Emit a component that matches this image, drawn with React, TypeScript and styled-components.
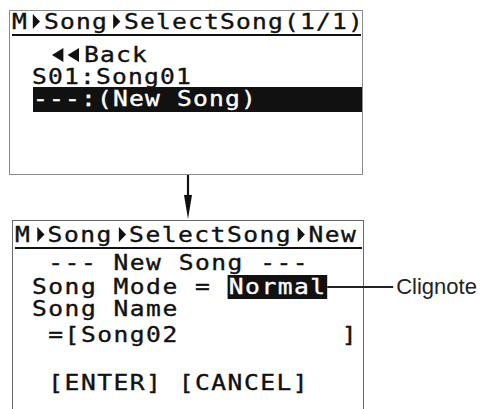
import React from "react";
import styled, { createGlobalStyle } from "styled-components";

const LCD_FONT = `"DejaVu Sans Mono", "Liberation Mono", monospace`;
const LCD_SIZE = 20.5;
const ADVANCE = LCD_SIZE * 0.602;
/** the LCD glyphs are wider than any installed mono face, so stretch them */
const STRETCH = 1.2;
const INK = "#111";

const GlobalStyle = createGlobalStyle`
  html, body {
    margin: 0;
    padding: 0;
    background: #fff;
  }
`;

const Page = styled.div`
  width: 484px;
  height: 409px;
  overflow: hidden;
  box-sizing: border-box;
  padding-top: 10px;
  display: flex;
  flex-direction: column;
  align-items: flex-start;
  background: #fff;
`;

/** One LCD panel; $pitch is the character cell width on screen, in px */
const Screen = styled.div<{ $pitch: number; $left: number; $width: number; $open?: boolean }>`
  box-sizing: border-box;
  margin-left: ${({ $left }) => $left}px;
  width: ${({ $width }) => $width}px;
  height: ${({ $open }) => ($open ? 200 : 175)}px;
  border: 1px solid ${({ $open }) => ($open ? "#6a6a6a" : "#8c8c8c")};
  ${({ $open }) => ($open ? "border-bottom: none; padding-top: 3px;" : "")}
  font-family: ${LCD_FONT};
  font-weight: normal;
  font-size: ${LCD_SIZE}px;
  letter-spacing: ${({ $pitch }) => ($pitch / STRETCH - ADVANCE).toFixed(2)}px;
  color: ${INK};
  white-space: pre;
  -webkit-text-stroke: 0.35px ${INK};
`;

const Lcd = styled.span`
  display: inline-block;
  transform: scaleX(${STRETCH});
  transform-origin: 0 50%;
`;

const TitleLine = styled.div<{ $indent: number }>`
  height: 23px;
  line-height: 23px;
  margin: 0 1px 0 2px;
  padding-left: ${({ $indent }) => $indent}px;
  border-bottom: 2px solid ${INK};
`;

const Line = styled.div<{ $indent: number; $gap?: number }>`
  height: 22px;
  line-height: 22px;
  margin-top: ${({ $gap }) => $gap ?? 0}px;
  padding-left: ${({ $indent }) => $indent}px;
`;

const SelectedBar = styled.div<{ $indent: number; $gap?: number }>`
  height: 25px;
  line-height: 25px;
  margin-top: ${({ $gap }) => $gap ?? 0}px;
  margin-left: ${({ $indent }) => $indent}px;
  background: ${INK};
  color: #fff;
  -webkit-text-stroke: 0.35px #fff;
`;

const Blink = styled.span`
  position: relative;
  background: ${INK};
  color: #fff;
  -webkit-text-stroke: 0.35px #fff;
  padding: 0 1px;
`;

/** annotation pointing at the blinking value; un-stretched so its label reads normally */
const Callout = styled.span`
  position: absolute;
  left: 100%;
  top: 50%;
  transform: translateY(-50%) scaleX(${1 / STRETCH});
  transform-origin: 0 50%;
  display: flex;
  align-items: center;
  letter-spacing: normal;
  -webkit-text-stroke: 0;
`;

const Leader = styled.span`
  display: block;
  width: 66px;
  height: 1.5px;
  background: #222;
`;

const Label = styled.span`
  margin-left: 3px;
  font-family: "Liberation Sans", Arial, sans-serif;
  font-weight: normal;
  font-size: 22px;
  line-height: 24px;
  color: #222;
`;

const Glyph = styled.svg<{ $cell: number }>`
  display: inline-block;
  width: ${({ $cell }) => $cell}px;
  height: 15px;
  vertical-align: baseline;
`;

const Connector = styled.div`
  height: 45px;
  padding-left: 183px;
  box-sizing: border-box;
`;

const ArrowSvg = styled.svg`
  display: block;
  width: 10px;
  height: 45px;
`;

/** LCD "▶" separator; cell is the unstretched width */
const Pointer = ({ pitch }: { pitch: number }) => {
  const cell = pitch / STRETCH;
  return (
    <Glyph $cell={cell} viewBox={`0 0 ${cell} 15`}>
      <polygon points={`${cell - 9},0 ${cell - 3},7.5 ${cell - 9},15`} fill={INK} />
    </Glyph>
  );
};

/** LCD "◀" back marker */
const BackMark = ({ pitch }: { pitch: number }) => {
  const cell = pitch / STRETCH;
  return (
    <Glyph $cell={cell} viewBox={`0 0 ${cell} 15`}>
      <polygon points="0,8 9.5,1 9.5,15" fill={INK} />
    </Glyph>
  );
};

const TOP_PITCH = 16;
const BOTTOM_PITCH = 16.3;

export default function App() {
  return (
    <>
      <GlobalStyle />
      <Page>
        <Screen $pitch={TOP_PITCH} $left={9} $width={354}>
          <TitleLine $indent={0}>
            <Lcd>
              M<Pointer pitch={TOP_PITCH} />Song<Pointer pitch={TOP_PITCH} />SelectSong(1/1)
            </Lcd>
          </TitleLine>
          <Line $indent={42} $gap={8}>
            <Lcd>
              <BackMark pitch={TOP_PITCH} />
              <BackMark pitch={TOP_PITCH} />Back
            </Lcd>
          </Line>
          <Line $indent={22}>
            <Lcd>S01:Song01</Lcd>
          </Line>
          <SelectedBar $indent={23} $gap={-1}>
            <Lcd>---:(New Song)</Lcd>
          </SelectedBar>
        </Screen>

        <Connector>
          <ArrowSvg viewBox="0 0 10 45">
            <line x1="5" y1="0" x2="5" y2="26" stroke={INK} strokeWidth="2.2" />
            <polygon points="1,20 9,20 5,44" fill={INK} />
          </ArrowSvg>
        </Connector>

        <Screen $pitch={BOTTOM_PITCH} $left={12} $width={352} $open>
          <TitleLine $indent={0}>
            <Lcd>
              M<Pointer pitch={BOTTOM_PITCH} />Song<Pointer pitch={BOTTOM_PITCH} />SelectSong
              <Pointer pitch={BOTTOM_PITCH} />New
            </Lcd>
          </TitleLine>
          <Line $indent={19} $gap={3}>
            <Lcd>{" --- New Song ---"}</Lcd>
          </Line>
          <Line $indent={19} $gap={2}>
            <Lcd>
              {"Song Mode = "}
              <Blink>
                Normal
                <Callout>
                  <Leader />
                  <Label>Clignote</Label>
                </Callout>
              </Blink>
            </Lcd>
          </Line>
          <Line $indent={19}>
            <Lcd>Song Name</Lcd>
          </Line>
          <Line $indent={19} $gap={4}>
            <Lcd>{" =[Song02          ]"}</Lcd>
          </Line>
          <Line $indent={19} $gap={26}>
            <Lcd>{" [ENTER] [CANCEL]"}</Lcd>
          </Line>
        </Screen>
      </Page>
    </>
  );
}
